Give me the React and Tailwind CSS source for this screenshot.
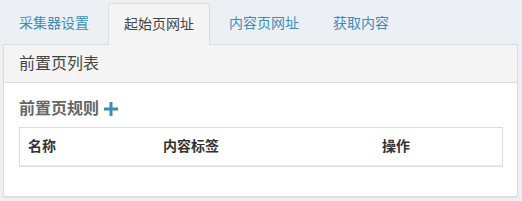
import React from "react";

const tabs = ["采集器设置", "起始页网址", "内容页网址", "获取内容"];

export default function App() {
  const active = 1;
  return (
    <div
      className="w-[522px] h-[201px] bg-[#ecf0f5] overflow-hidden"
      style={{ fontFamily: '"Liberation Sans", "Noto Sans CJK SC", sans-serif' }}
    >
      <div className="flex items-end gap-[4px] pl-[4px] pt-[3px] h-[44px]">
        {tabs.map((t, i) => (
          <div
            key={t}
            className={
              i === active
                ? "h-[42px] -mb-px px-[15px] flex items-center text-[14px] text-[#444] bg-[#f4f4f5] border border-b-0 border-[#dcdcdc] rounded-t-[3px] relative z-10"
                : "h-[41px] px-[15px] flex items-center text-[14px] text-[#3c8dbc]"
            }
          >
            {t}
          </div>
        ))}
      </div>
      <div className="mx-[3px] w-[515px] h-[153px] bg-white border border-[#dcdcdc] rounded-b-[3px] shadow-[0_1px_1px_rgba(0,0,0,0.05)]">
        <div className="h-[38px] bg-[#f4f4f5] border-b border-[#dcdcdc] flex items-center px-[15px] text-[16px] text-[#444]">
          前置页列表
        </div>
        <div className="px-[15px] pt-[16px]">
          <div className="flex items-center gap-[5px] text-[16px] font-bold text-[#666] leading-[20px]">
            前置页规则
            <svg width="14" height="14" viewBox="0 0 14 14">
              <path d="M5.5 0h3v5.5H14v3H8.5V14h-3V8.5H0v-3h5.5z" fill="#3c8dbc" />
            </svg>
          </div>
          <div className="mt-[8px] w-[484px] border border-[#dcdcdc]">
            <div className="h-[38px] flex items-center text-[14px] font-bold text-[#333] border-b border-[#ececec]">
              <div className="w-[143px] pl-[8px]">名称</div>
              <div className="w-[219px]">内容标签</div>
              <div>操作</div>
            </div>
          </div>
        </div>
      </div>
    </div>
  );
}
